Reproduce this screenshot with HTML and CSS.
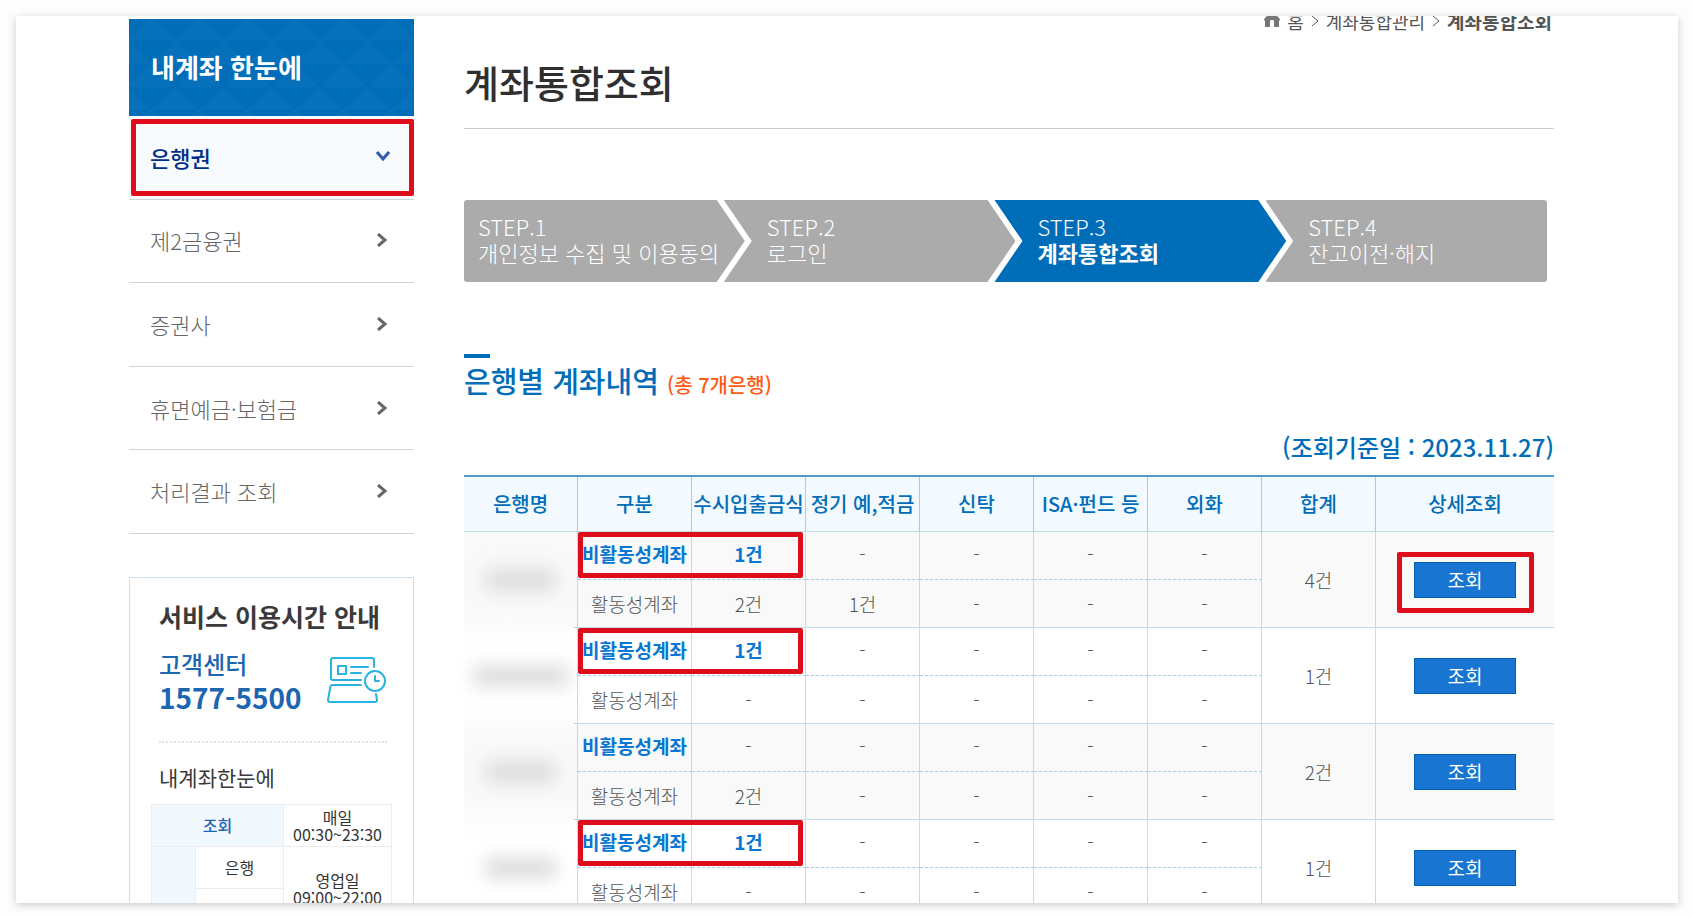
FILE: index.html
```html
<!DOCTYPE html>
<html lang="ko">
<head>
    <meta charset="UTF-8">
    <meta name="viewport" content="width=device-width, initial-scale=1.0">
    <title>계좌통합조회</title>
    <link rel="stylesheet" href="styles.css">
</head>
<body>

    <div class="page">
        <aside class="sidebar">
            <h2 class="sidebar-title">
                <svg class="sidebar-pattern" aria-hidden="true">
                    <defs>
                        <pattern id="triangles" width="48" height="46" patternUnits="userSpaceOnUse" x="-2" y="-24">
                            <path d="M0 46 L24 22 L48 46 Z M-24 23 L0 0 L24 23 Z M24 23 L48 0 L72 23 Z" fill="#fff" fill-opacity="0.025"/>
                        </pattern>
                    </defs>
                    <rect width="100%" height="100%" fill="url(#triangles)"/>
                </svg>
                <span>내계좌 한눈에</span>
            </h2>
            <nav class="menu">
                <a href="#" class="menu-item active">은행권
                    <svg width="14" height="11" viewBox="0 0 14 11"><path d="M1 1 L7 8 L13 1" fill="none" stroke="currentColor" stroke-width="3"/></svg>
                    <span class="mark"></span>
                </a>
                <a href="#" class="menu-item">제2금융권
                    <svg width="11" height="14" viewBox="0 0 11 14"><path d="M1 1 L8 7 L1 13" fill="none" stroke="currentColor" stroke-width="3"/></svg>
                </a>
                <a href="#" class="menu-item">증권사
                    <svg width="11" height="14" viewBox="0 0 11 14"><path d="M1 1 L8 7 L1 13" fill="none" stroke="currentColor" stroke-width="3"/></svg>
                </a>
                <a href="#" class="menu-item">휴면예금·보험금
                    <svg width="11" height="14" viewBox="0 0 11 14"><path d="M1 1 L8 7 L1 13" fill="none" stroke="currentColor" stroke-width="3"/></svg>
                </a>
                <a href="#" class="menu-item">처리결과 조회
                    <svg width="11" height="14" viewBox="0 0 11 14"><path d="M1 1 L8 7 L1 13" fill="none" stroke="currentColor" stroke-width="3"/></svg>
                </a>
            </nav>

            <section class="service">
                <h3>서비스 이용시간 안내</h3>
                <div class="center">
                    <div>
                        <p class="center-name">고객센터</p>
                        <p class="center-tel">1577-5500</p>
                    </div>
                    <svg width="60" height="48" viewBox="0 0 60 48" fill="none" stroke="#2bb3df" stroke-width="2" stroke-linejoin="round" stroke-linecap="round">
                        <path d="M47 11 V4 Q47 2 45 2 H6 Q4 2 4 4 V22 Q4 24 6 24 H34"/>
                        <path d="M34 29 H5 Q4 29 3.500 30 L1 44 Q1 46 3 46 H48 Q50 46 50 44 L49 38"/>
                        <rect x="11" y="10" width="8" height="8"/>
                        <path d="M24 11 H41 M24 17 H34"/>
                        <circle cx="48" cy="25" r="10"/>
                        <path d="M48 20 V25 H52"/>
                    </svg>
                </div>
                <h4>내계좌한눈에</h4>
                <table class="hours">
                    <colgroup><col class="hours-a"><col class="hours-b"><col></colgroup>
                    <tr>
                        <th colspan="2">조회</th>
                        <td>매일<br>00:30~23:30</td>
                    </tr>
                    <tr>
                        <th rowspan="2"></th>
                        <td>은행</td>
                        <td rowspan="2">영업일<br>09:00~22:00</td>
                    </tr>
                    <tr>
                        <td></td>
                    </tr>
                </table>
            </section>
        </aside>

        <main class="content">
            <div class="breadcrumb">
                <svg width="16" height="13" viewBox="0 0 16 13"><path d="M0 5 Q0 3 3 1 Q8 -1 13 1 Q16 3 16 5 L15 6 V12 H10 V6 Q10 5 8 5 Q6 5 6 6 V12 H1 V6 Z" fill="#777"/></svg>
                <a href="#">홈</a>
                <svg width="8" height="12" viewBox="0 0 8 12"><path d="M1 1 L7 6 L1 11" fill="none" stroke="#555"/></svg>
                <a href="#">계좌통합관리</a>
                <svg width="8" height="12" viewBox="0 0 8 12"><path d="M1 1 L7 6 L1 11" fill="none" stroke="#555"/></svg>
                <strong>계좌통합조회</strong>
            </div>
            <h1>계좌통합조회</h1>

            <ol class="steps">
                <li>STEP.1<br>개인정보 수집 및 이용동의</li>
                <li>STEP.2<br>로그인</li>
                <li class="current">STEP.3<br><strong>계좌통합조회</strong></li>
                <li>STEP.4<br>잔고이전·해지</li>
            </ol>

            <h2 class="section-title">은행별 계좌내역 <span>(총 7개은행)</span></h2>
            <p class="date">(조회기준일 : 2023.11.27)</p>

            <table class="accounts">
                <colgroup>
                    <col class="col"><col class="col"><col class="col"><col class="col">
                    <col class="col"><col class="col"><col class="col"><col class="col">
                    <col>
                </colgroup>
                <thead>
                    <tr>
                        <th>은행명</th>
                        <th>구분</th>
                        <th>수시입출금식</th>
                        <th>정기 예,적금</th>
                        <th>신탁</th>
                        <th>ISA·펀드 등</th>
                        <th>외화</th>
                        <th>합계</th>
                        <th>상세조회</th>
                    </tr>
                </thead>
                <tbody>
                    <tr class="inactive odd">
                        <td rowspan="2" class="bank first"><span class="hidden-name"></span></td>
                        <td class="key">비활동성계좌<span class="mark"></span></td>
                        <td class="key">1건</td><td>-</td><td>-</td><td>-</td><td>-</td>
                        <td rowspan="2" class="total">4건</td>
                        <td rowspan="2" class="total"><div class="action"><button type="button">조회</button><span class="mark"></span></div></td>
                    </tr>
                    <tr class="odd">
                        <td>활동성계좌</td><td>2건</td><td>1건</td><td>-</td><td>-</td><td>-</td>
                    </tr>
                    <tr class="inactive">
                        <td rowspan="2" class="bank"><span class="hidden-name wide"></span></td>
                        <td class="key">비활동성계좌<span class="mark"></span></td>
                        <td class="key">1건</td><td>-</td><td>-</td><td>-</td><td>-</td>
                        <td rowspan="2" class="total">1건</td>
                        <td rowspan="2" class="total"><button type="button">조회</button></td>
                    </tr>
                    <tr>
                        <td>활동성계좌</td><td>-</td><td>-</td><td>-</td><td>-</td><td>-</td>
                    </tr>
                    <tr class="inactive odd">
                        <td rowspan="2" class="bank"><span class="hidden-name"></span></td>
                        <td class="key">비활동성계좌</td>
                        <td>-</td><td>-</td><td>-</td><td>-</td><td>-</td>
                        <td rowspan="2" class="total">2건</td>
                        <td rowspan="2" class="total"><button type="button">조회</button></td>
                    </tr>
                    <tr class="odd">
                        <td>활동성계좌</td><td>2건</td><td>-</td><td>-</td><td>-</td><td>-</td>
                    </tr>
                    <tr class="inactive">
                        <td rowspan="2" class="bank"><span class="hidden-name"></span></td>
                        <td class="key">비활동성계좌<span class="mark"></span></td>
                        <td class="key">1건</td><td>-</td><td>-</td><td>-</td><td>-</td>
                        <td rowspan="2" class="total">1건</td>
                        <td rowspan="2" class="total"><button type="button">조회</button></td>
                    </tr>
                    <tr>
                        <td>활동성계좌</td><td>-</td><td>-</td><td>-</td><td>-</td><td>-</td>
                    </tr>
                </tbody>
            </table>
        </main>
    </div>

</body>
</html>
```
FILE: styles.css
```css
* {
    box-sizing: border-box;
}
body {
    margin: 0;
    padding: 16px 16px 15px;
    height: 100vh;
    background: #fdfdfd;
    font-family: "Noto Sans CJK KR", sans-serif;
    font-weight: 300;
    color: #555;
}
h1, h2, h3, h4, p, ol {
    margin: 0;
    padding: 0;
}
a {
    color: inherit;
    text-decoration: none;
}
.page {
    display: flex;
    gap: 50px;
    height: 100%;
    padding: 0 124px 0 113px;
    overflow: hidden;
    background: #fff;
    box-shadow: 0 2px 8px rgba(0, 0, 0, 0.2);
}

/* red highlight boxes */
.mark {
    position: absolute;
    z-index: 2;
    border: 5px solid #df0d1b;
    border-radius: 2px;
    pointer-events: none;
}

/* sidebar */
.sidebar {
    flex: 0 0 285px;
    padding-top: 3px;
}
.sidebar-title {
    position: relative;
    height: 97px;
    padding-left: 22px;
    background: #006db9;
    color: #fff;
    font-size: 26px;
    line-height: 95px;
}
.sidebar-title span {
    position: relative;
}
.sidebar-pattern {
    position: absolute;
    top: 0;
    left: 0;
    width: 100%;
    height: 100%;
}
.menu {
    display: grid;
    grid-auto-rows: 1fr;
    height: 418px;
}
.menu-item {
    position: relative;
    display: flex;
    align-items: center;
    justify-content: space-between;
    padding: 0 26px 1px 21px;
    border-bottom: 1px solid #cbd6df;
    font-size: 22px;
    color: #666;
}
.menu-item.active {
    padding-right: 24px;
    background: #f7fbfe;
    color: #002f87;
    font-weight: 500;
}
.menu-item.active svg {
    color: #355ca8;
}
.menu-item .mark {
    inset: 3px 0 3px 2px;
}

/* service hours */
.service {
    margin-top: 43px;
    padding: 18px 21px;
    border: 1px solid #cfdfeb;
}
.service h3 {
    padding-left: 8px;
    font-size: 25px;
    line-height: 40px;
    color: #3a3a3a;
    white-space: nowrap;
}
.center {
    display: flex;
    justify-content: space-between;
    align-items: center;
    margin: 0 5px 0 8px;
    height: 107px;
    padding-bottom: 17px;
    border-bottom: 2px dotted #e2e2e2;
    color: #1d66b0;
    font-weight: 700;
}
.center-name {
    font-size: 24px;
    line-height: 34px;
    font-weight: 500;
}
.center-tel {
    font-size: 28px;
    line-height: 32px;
}
.service h4 {
    padding-left: 8px;
    margin: 14px 0 7px;
    font-size: 21px;
    font-weight: 400;
    line-height: 40px;
    color: #3a3a3a;
}
.hours {
    width: 100%;
    table-layout: fixed;
    border-collapse: collapse;
    font-size: 16px;
    font-weight: 400;
    line-height: 17px;
    text-align: center;
    color: #333;
}
.hours-a {
    width: 44px;
}
.hours-b {
    width: 88px;
}
.hours th, .hours td {
    height: 42px;
    padding: 0;
    border: 1px solid #ececf0;
}
.hours th {
    background: #f1f8fe;
    color: #1d66b0;
    font-weight: 500;
}

/* main column */
.content {
    flex: 1;
    min-width: 0;
}
.breadcrumb {
    display: flex;
    justify-content: flex-end;
    align-items: center;
    gap: 7px;
    height: 10px;
    padding-right: 2px;
    font-size: 18px;
    font-weight: 400;
    line-height: 10px;
}
.breadcrumb strong {
    font-size: 19px;
}
h1 {
    margin-top: 28px;
    padding-bottom: 18px;
    border-bottom: 1px solid #ccc;
    font-size: 38px;
    font-weight: 500;
    line-height: 56px;
    color: #2f2f2f;
}
.steps {
    display: flex;
    margin: 71px 7px 0 0;
    list-style: none;
    color: #fff;
    font-size: 22px;
    line-height: 26px;
    white-space: nowrap;
}
.steps li {
    flex: 1 1 292px;
    height: 82px;
    margin-left: -21px;
    padding: 13px 0 0 43px;
    background: #ababab;
    clip-path: polygon(0 0, calc(100% - 28px) 0, 100% 50%, calc(100% - 28px) 100%, 0 100%, 28px 50%);
}
.steps li:first-child {
    flex-basis: 281px;
    margin-left: 0;
    padding-left: 14px;
    border-radius: 3px;
    clip-path: polygon(0 0, calc(100% - 28px) 0, 100% 50%, calc(100% - 28px) 100%, 0 100%);
}
.steps li:last-child {
    flex-basis: 282px;
    border-radius: 3px;
    clip-path: polygon(0 0, 100% 0, 100% 100%, 0 100%, 28px 50%);
}
.steps li.current {
    background: #006db9;
}
.steps strong {
    font-weight: 700;
}
.section-title {
    margin-top: 72px;
    font-size: 29px;
    font-weight: 500;
    line-height: 44px;
    color: #006db9;
}
.section-title::before {
    content: "";
    display: block;
    width: 26px;
    height: 4px;
    background: #006db9;
}
.section-title span {
    font-size: 20px;
    color: #ff5a14;
}
.date {
    margin: 25px 0 13px;
    font-size: 24px;
    font-weight: 500;
    line-height: 30px;
    text-align: right;
    color: #006db9;
}

/* account table */
.accounts {
    width: 100%;
    table-layout: fixed;
    border-collapse: separate;
    border-spacing: 0;
    border-top: 2px solid #5599cb;
    font-size: 19px;
    line-height: 28px;
    text-align: center;
    white-space: nowrap;
}
.accounts .col {
    width: 114px;
}
.accounts th {
    height: 55px;
    padding: 0;
    border-right: 1px solid #a0cdf5;
    border-bottom: 1px solid #c4dbea;
    background: #f2f9ff;
    color: #006db9;
    font-size: 20px;
    font-weight: 500;
}
.accounts td {
    position: relative;
    height: 48px;
    padding: 0;
    border-right: 1px solid #c4dbea;
    border-bottom: 1px solid #c4dbea;
}
.accounts th:last-child,
.inactive td:last-child {
    border-right: 0;
}
.accounts .inactive td {
    padding-bottom: 3px;
    border-bottom: 1px dashed #a9cce3;
}
.accounts .inactive td.total {
    padding-bottom: 0;
    border-bottom: 1px solid #c4dbea;
}
.odd td {
    background: #f9f9f9;
}
.accounts .key {
    color: #0877d2;
    font-weight: 700;
}
.key .mark {
    top: 0;
    left: 0;
    width: calc(200% - 1px);
    height: 46px;
}
.accounts .inactive td.bank {
    padding-bottom: 0;
    border-bottom: 0;
    background: linear-gradient(#fcfcfd, #fff 20px, #fff 76px, #fcfcfd);
}
.accounts .odd.inactive td.bank {
    background: linear-gradient(#fcfcfd, #f9f9fa 20px, #f9f9fa 76px, #fcfcfd);
}
.accounts .odd.inactive td.first {
    background: linear-gradient(#f9f9fa 76px, #fcfcfd);
}
.bank::after {
    content: "";
    position: absolute;
    right: 0;
    bottom: 0;
    width: 4px;
    height: 1px;
    background: #c4dbea;
}
.hidden-name {
    display: block;
    width: 70px;
    height: 20px;
    margin: 0 auto;
    background: #dadada;
    filter: blur(9px);
}
.hidden-name.wide {
    width: 94px;
}
.action {
    position: relative;
    display: inline-block;
}
.action .mark {
    inset: -10px -18px -15px -17px;
}
button {
    display: block;
    width: 102px;
    height: 36px;
    margin: 0 auto;
    padding: 0;
    border: 1px solid #005fa8;
    background: #1875d1;
    color: #fff;
    font-family: inherit;
    font-size: 19px;
    font-weight: 400;
    line-height: 28px;
    cursor: pointer;
}
```
